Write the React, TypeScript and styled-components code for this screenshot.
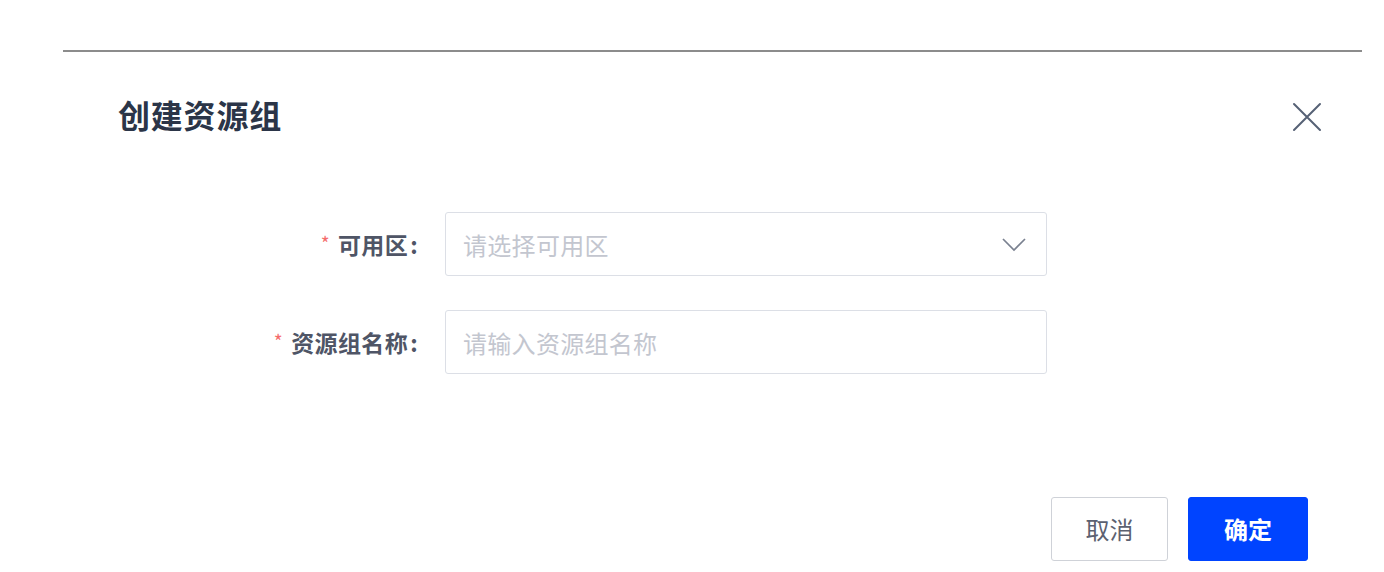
import styled, { createGlobalStyle } from 'styled-components'

const GlobalStyle = createGlobalStyle`
  html, body {
    margin: 0;
    padding: 0;
    background: #ffffff;
  }
  body {
    font-family: "Noto Sans CJK SC", "Noto Sans", sans-serif;
  }
`

const Page = styled.div`
  width: 1384px;
  height: 572px;
  box-sizing: border-box;
  padding: 50px 22px 0 63px;
  overflow: hidden;
`

const Dialog = styled.div`
  border-top: 2px solid #8c8c8c;
  padding: 42px 40px 0 55px;
`

const Header = styled.div`
  display: flex;
  align-items: center;
  justify-content: space-between;
  height: 40px;
`

const Title = styled.h2`
  margin: 0;
  font-size: 32px;
  letter-spacing: 0.8px;
  line-height: 40px;
  font-weight: 700;
  color: #2b3548;
`

const CloseButton = styled.button`
  display: flex;
  align-items: center;
  justify-content: center;
  width: 30px;
  height: 30px;
  margin-top: 6px;
  padding: 0;
  border: none;
  background: none;
  cursor: pointer;
`

const Form = styled.div`
  display: flex;
  flex-direction: column;
  gap: 34px;
  margin-top: 78px;
`

const Row = styled.div`
  display: flex;
  align-items: center;
`

const Label = styled.label`
  width: 300px;
  margin-right: 27px;
  text-align: right;
  font-size: 23px;
  letter-spacing: 0.4px;
  font-weight: 700;
  color: #4f5566;
  white-space: nowrap;
`

const Colon = styled.span`
  margin-left: 2px;
`

const Star = styled.span`
  color: #f56c6c;
  font-size: 19px;
  font-weight: 400;
  margin-right: 8px;
  position: relative;
  top: -3px;
`

const Field = styled.div`
  width: 602px;
  height: 64px;
  box-sizing: border-box;
  border: 1px solid #dcdfe6;
  border-radius: 3px;
  display: flex;
  align-items: center;
  padding: 0 20px 0 17px;
`

const Input = styled.input`
  flex: 1;
  border: none;
  outline: none;
  background: transparent;
  padding: 0;
  font-family: inherit;
  font-size: 24px;
  letter-spacing: 0.3px;
  color: #303133;

  &::placeholder {
    color: #c3c6cf;
  }
`

const Chevron = styled.svg`
  width: 24px;
  height: 24px;
`

const Footer = styled.div`
  display: flex;
  justify-content: flex-end;
  gap: 20px;
  margin-top: 123px;
  padding-right: 14px;
`

const Button = styled.button<{ $primary?: boolean }>`
  height: 64px;
  width: ${p => (p.$primary ? '120px' : '117px')};
  box-sizing: border-box;
  border-radius: 3px;
  font-family: inherit;
  font-size: 24px;
  line-height: 1;
  font-weight: ${p => (p.$primary ? 700 : 400)};
  cursor: pointer;
  border: 1px solid ${p => (p.$primary ? '#0044ff' : '#cfd2d8')};
  background: ${p => (p.$primary ? '#0044ff' : '#ffffff')};
  color: ${p => (p.$primary ? '#ffffff' : '#5c6170')};
`

export default function App() {
  return (
    <>
      <GlobalStyle />
      <Page>
        <Dialog>
          <Header>
            <Title>创建资源组</Title>
            <CloseButton aria-label="关闭">
              <svg width="30" height="30" viewBox="0 0 30 30">
                <path d="M2 2 L28 28 M28 2 L2 28" stroke="#566175" strokeWidth="2" strokeLinecap="round" fill="none" />
              </svg>
            </CloseButton>
          </Header>

          <Form>
            <Row>
              <Label>
                <Star>*</Star>可用区<Colon>:</Colon>
              </Label>
              <Field>
                <Input readOnly placeholder="请选择可用区" />
                <Chevron viewBox="0 0 24 24">
                  <path d="M1 7 L12 18 L23 7" stroke="#7a8190" strokeWidth="1.7" fill="none" />
                </Chevron>
              </Field>
            </Row>
            <Row>
              <Label>
                <Star>*</Star>资源组名称<Colon>:</Colon>
              </Label>
              <Field>
                <Input placeholder="请输入资源组名称" />
              </Field>
            </Row>
          </Form>

          <Footer>
            <Button>取消</Button>
            <Button $primary>确定</Button>
          </Footer>
        </Dialog>
      </Page>
    </>
  )
}
